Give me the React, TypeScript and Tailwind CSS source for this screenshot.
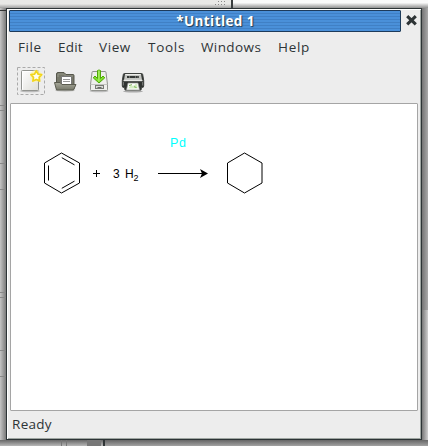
import React from "react";

const menus = [
  { label: "File", cls: "w-[40px] tracking-[0.6px]" },
  { label: "Edit", cls: "w-[41px] tracking-[0.2px]" },
  { label: "View", cls: "w-[49px] tracking-[0.6px]" },
  { label: "Tools", cls: "w-[53px] tracking-[0.7px]" },
  { label: "Windows", cls: "w-[77px] tracking-[0.4px]" },
  { label: "Help", cls: "w-[40px] tracking-[0.7px]" },
];

function NewIcon() {
  return (
    <svg width="28" height="28" viewBox="0 0 28 28">
      <rect x="0.5" y="0.5" width="27" height="27" fill="none" stroke="#aaa" strokeDasharray="3 2" />
      <ellipse cx="13" cy="24" rx="10" ry="1.3" fill="#bbb" />
      <rect x="4.5" y="3.5" width="17" height="20" rx="1" fill="url(#paper)" stroke="#929490" />
      <path d="M5.5 22.5V4.5h15" fill="none" stroke="#fff" />
      <circle cx="19" cy="9" r="6" fill="#fff6a8" opacity=".7" />
      <path d="M19.3 3.7 21 7.1l3.7.6-2.6 2.7.6 3.7-3.4-1.7-3.4 1.7.6-3.7-2.6-2.7 3.7-.6Z" fill="#fffef0" stroke="#f2d51b" strokeWidth="1.7" strokeLinejoin="round" />
      <defs>
        <linearGradient id="paper" x2="1" y2="1"><stop stopColor="#fff" /><stop offset="1" stopColor="#deded9" /></linearGradient>
      </defs>
    </svg>
  );
}

function OpenIcon() {
  return (
    <svg width="24" height="24" viewBox="0 0 24 24">
      <ellipse cx="12" cy="20.5" rx="10" ry="1.2" fill="#c4c4c2" />
      <path d="M3.5 19V4q0-1.500 1.500-1.500h6l2 2h7q1 0 1 1V19Z" fill="#77786a" stroke="#56574c" />
      <path d="M5 7V4h5.500l2 2H20" fill="none" stroke="#96978a" />
      <path d="M8.500 6.500h10v9h-10Z" fill="#fff" stroke="#777" />
      <path d="M10 9.500h7M10 11.500h7" stroke="#999" />
      <path d="M1.500 12.500h5.500l2 2h14l-2.500 5.500h-17Z" fill="url(#folder)" stroke="#5b5c50" />
      <defs><linearGradient id="folder" x2="0" y2="1"><stop stopColor="#a9aa9c" /><stop offset="1" stopColor="#77796a" /></linearGradient></defs>
    </svg>
  );
}

function SaveIcon() {
  return (
    <svg width="20" height="24" viewBox="0 0 20 24">
      <ellipse cx="10" cy="22" rx="9.500" ry="1.300" fill="#bbb" />
      <path d="M3 3.500q0-1 1-1h12q1 0 1 1l1.500 12v5q0 1-1 1h-15q-1 0-1-1v-5Z" fill="#eeeeec" stroke="#91938e" />
      <path d="M2 15.500h16" stroke="#c3c4c0" />
      <rect x="6.500" y="16.500" width="8" height="3" fill="#d9dad6" stroke="#777974" />
      <path d="M8.500 18.500h4" stroke="#666" />
      <path d="M8.500 1.500q1.500-1 3 0v8l2.500-2.500 1.800 1.800-5.800 5.200-5.800-5.200 1.800-1.800 2.500 2.500Z" fill="#7fdf2d" stroke="#4ea807" strokeLinejoin="round" />
      <path d="M9.900 1.500v11" stroke="#b5f276" />
    </svg>
  );
}

function PrintIcon() {
  return (
    <svg width="24" height="24" viewBox="0 0 24 24">
      <ellipse cx="12" cy="19.300" rx="10" ry="1.200" fill="#aaa" />
      <path d="M3.500 1.500h17q1 0 1.200 1l1 6v5.500q0 1.500-1.500 1.500h-.7l-.5 2.500H4l-.5-2.500h-.7q-1.500 0-1.500-1.500v-5.500l1-6q.2-1 1.200-1Z" fill="#303331" stroke="#3f423f" />
      <path d="M4 2h16l1 6H3Z" fill="#c3c5c1" />
      <path d="M4.500 2.500h15" stroke="#ededea" />
      <path d="M6 5h12" stroke="#343735" strokeWidth="1.800" strokeDasharray="2 .4 6 .4" />
      <path d="M2.500 8.500h19" stroke="#e9eae7" strokeWidth="1.400" />
      <path d="M2.500 10v3.500M21.500 10v3.500" stroke="#717471" />
      <path d="M7 11h10l1.500 7H5.500Z" fill="#fff" stroke="#8f928e" strokeWidth=".7" />
      <path d="m7 16.500 2-2.500 4-.5 2-2 1.200 1 .5 4Z" fill="#d5edc4" />
      <path d="m8 13.500 3-.8m2 2 2.500.8" stroke="#75b14f" />
    </svg>
  );
}

function Reaction() {
  return (
    <svg width="406" height="305" viewBox="11 104 406 305" className="block" style={{ fontFamily: '"Liberation Sans", Arial, sans-serif' }}>
      <g fill="none" stroke="#000" strokeWidth="1">
        <path d="M61.500 153 79.500 163v20L61.500 193 44.500 183v-20Z" />
        <path d="M48.500 165.500v15M61.800 157.700l12.700 7.200M61.800 188.300l12.700-7.200" />
        <path d="M244.500 153 262 163v20L244.500 193 227.500 183v-20Z" />
        <path d="M158 173.500h44" />
      </g>
      <path d="m200 169 8 4.500-8 4.500 2-4.500Z" />
      <path d="M93 173.500h7M96.500 170v7" stroke="#000" />
      <text x="113" y="178" fontSize="12">3</text>
      <text x="125" y="178" fontSize="12">H</text>
      <text x="133.500" y="181" fontSize="9">2</text>
      <text x="170" y="147" fontSize="12.500" letterSpacing="0.700" fill="#00ffff">Pd</text>
    </svg>
  );
}

export default function App() {
  return (
    <div className="flex h-[446px] w-[428px] flex-col overflow-hidden bg-[#999] text-[#2e3436] [font-family:'Open_Sans','Noto_Sans',sans-serif]">
      <div className="flex h-2 shrink-0">
        <div className="flex w-[231px] justify-end bg-linear-to-b from-[#e8e8e6] from-50% to-[#a0a0a0] pr-[4px]">
          <svg width="12" height="8"><path d="M3 1.500h9M0 4.500h12" stroke="#888" strokeDasharray="1 2" /></svg>
        </div>
        <div className="w-[2px] bg-[#3a3e3f]" />
        <div className="flex-1 bg-linear-to-b from-[#fafafa] from-35% to-[#929292]" />
      </div>

      <div className="flex h-[432px] shrink-0">
        <div className="flex w-[6px] flex-col bg-linear-to-r from-[#c5c5c5] to-[#7b7b7b]">
          <i className="h-px bg-[#333] mt-[2px]" />
          <i className="h-px bg-[#888] mt-[94px]" />
          <i className="h-px bg-[#888] mt-[4px]" />
          <i className="h-px bg-[#888] mt-[52px]" />
          <i className="h-px bg-[#888] mt-[25px]" />
          <i className="h-px bg-[#888] mt-[102px]" />
          <i className="h-px bg-[#888] mt-[4px]" />
          <i className="h-px bg-[#888] mt-[52px]" />
          <i className="h-px bg-[#888] mt-[25px]" />
        </div>

        <main className="flex w-[416px] flex-col border border-[#2d3436] bg-[#ededed] shadow-[inset_1px_1px_#fff,inset_-1px_-1px_#9fa6a2]">
          <header className="flex h-[23px] shrink-0 pl-[2px] pt-px">
            <div className="flex h-[22px] w-[392px] items-center justify-center rounded-[1px] border border-[#1d3b5b] bg-[repeating-linear-gradient(to_bottom,#4a90d9_0px,#4a90d9_2px,#4080c5_2px,#4080c5_3px)] pl-[21px] text-[13.5px] leading-5 font-bold tracking-[0.4px] text-white [text-shadow:1px_1px_1px_#20374e]">
              *Untitled 1
            </div>
            <svg className="ml-[4px] mt-[4px]" width="13" height="13" viewBox="0 0 13 13">
              <path d="m2.200 2.200 8.600 8.100m0-8.100-8.600 8.100" stroke="#2e3436" strokeWidth="3.100" />
            </svg>
          </header>

          <nav className="flex h-[32px] shrink-0 items-center pb-[3px] pl-[11px] text-[13.5px] leading-5">
            {menus.map((m) => <span key={m.label} className={m.cls}>{m.label}</span>)}
          </nav>

          <div className="flex h-[39px] shrink-0 pl-[10px] pt-[3px]">
            <NewIcon />
            <div className="ml-[8px] mt-[3px]"><OpenIcon /></div>
            <div className="ml-[12px] mt-[2px]"><SaveIcon /></div>
            <div className="ml-[12px] mt-[5px]"><PrintIcon /></div>
          </div>

          <section className="ml-[3px] h-[308px] w-[408px] shrink-0 overflow-hidden rounded-[1px] border border-[#a5a5a5] bg-white">
            <Reaction />
          </section>
          <footer className="flex h-[28px] items-center pb-[2px] pl-[5px] text-[13.5px] leading-5 tracking-[0.3px]">Ready</footer>
        </main>

        <div className="flex w-[6px] flex-col">
          <div className="h-[302px] bg-linear-to-r from-[#747474] to-[#aaa]" />
          <div className="flex-1 bg-linear-to-r from-[#787878] to-[#d0d0d0]" />
        </div>
      </div>

      <div className="flex h-[6px] shrink-0 bg-linear-to-b from-[#686868] to-[#b8b8b8]">
        <div className="ml-[61px] w-[6px] border-x border-[#777]" />
        <div className="ml-[20px] w-[14px] bg-[#777]" />
        <div className="ml-[2px] w-[2px] bg-[#303536]" />
        <div className="flex-1 bg-linear-to-b from-[#666] to-[#a2a2a2]" />
      </div>
    </div>
  );
}
